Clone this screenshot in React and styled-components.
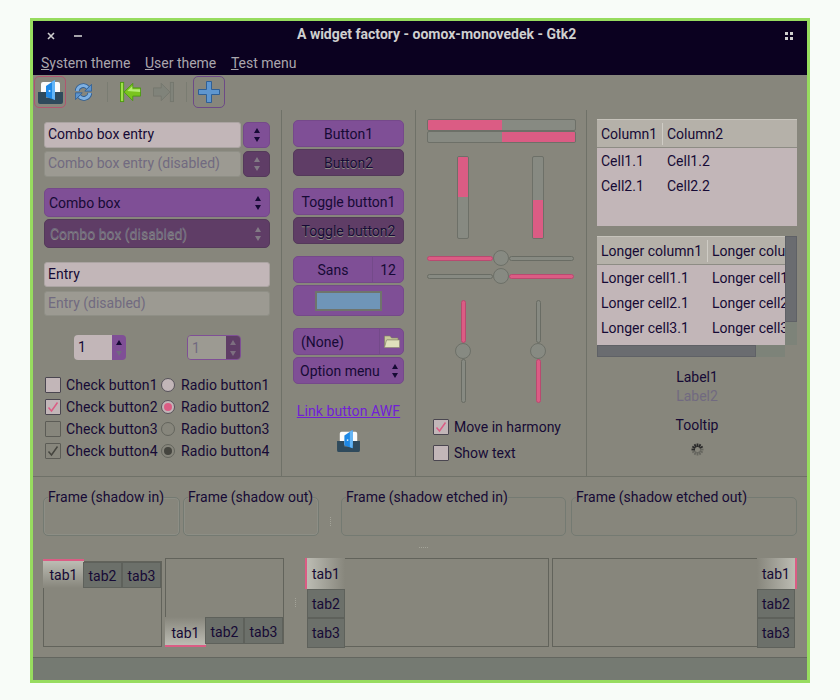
import React from "react";
import styled, { createGlobalStyle } from "styled-components";

const ink = "#160a35";
const faded = "#716a80";
const bg = "#87867c";
const purple = "#7f4f96";
const dark = "#5f3d66";
const pink = "#db5c84";
const field = "#c2b6b8";
const line = "#6f7168";

const Global = createGlobalStyle`
  html, body { margin: 0; background: #f8fcf8; }
  body { font-family: Roboto, "Liberation Sans", sans-serif; font-size: 14px; color: ${ink}; }
  * { box-sizing: border-box; }
`;

const Page = styled.div`width: 840px; height: 700px; padding: 18px 30px 0;`;
const Win = styled.div`
  width: 780px; height: 665px; border: 3px solid #97dc5f; background: ${bg};
  display: flex; flex-direction: column; overflow: hidden;
`;
const TitleBar = styled.div`
  height: 30px; flex: none; background: #0b0120; color: #cfcfcf; display: flex; align-items: center;
  justify-content: space-between; padding: 0 14px 0 14px; position: relative;
`;
const TitleText = styled.div`
  position: absolute; left: 264px; top: 4px; font-weight: 700; font-size: 14px; white-space: nowrap; line-height: 18px;
`;
const WinCtl = styled.div`display: flex; gap: 19px; align-items: center;`;
const MenuBar = styled.div`
  height: 24px; flex: none; background: #0b0120; color: #aaa6ad; display: flex; gap: 14.6px; padding: 3px 0 0 8px;
  line-height: 18px; font-size: 14px;
`;
const Ul = styled.span`text-decoration: underline;`;
const Toolbar = styled.div`height: 35px; flex: none; display: flex; align-items: flex-start; padding: 1px 0 0 1px;`;
const ToolBtn = styled.div`
  width: ${p => p.$w || 32}px; height: 32px; border-radius: 5px; display: flex; align-items: center; justify-content: center;
  margin-left: ${p => p.$ml || 0}px;
  border: 1px solid ${p => p.$ring || "transparent"};
`;
const ToolSep = styled.div`width: 1px; height: 20px; margin: 6px 0 0; background: #7a7c72; margin-left: ${p => p.$ml}px;`;

const Main = styled.div`height: 367px; flex: none; display: flex; border-bottom: 1px solid ${line};`;
const Col = styled.div`
  width: ${p => p.$w}px; flex: none; display: flex; flex-direction: column;
  padding: ${p => p.$pad}; border-right: ${p => (p.$last ? "none" : `1px solid ${line}`)};
`;
const Group = styled.div`
  display: flex; flex-direction: column; gap: ${p => p.$gap ?? 2}px; margin-top: ${p => p.$mt || 0}px;
  padding-left: ${p => p.$pl || 0}px;
`;
const Row = styled.div`display: flex; gap: ${p => p.$gap || 0}px; margin-top: ${p => p.$mt || 0}px; padding-left: ${p => p.$pl || 0}px;`;

const Field = styled.div`
  height: ${p => p.$h || 25}px; flex: 1;
  background: ${p => (p.$off ? "#9c9a92" : field)}; color: ${p => (p.$off ? faded : ink)};
  border-radius: 3px; border: 1px solid ${p => (p.$off ? "#8f8f86" : "#aba4a2")}; padding: 0 3px; line-height: 23px; white-space: nowrap;
`;
const Purple = styled.div`
  height: ${p => p.$h || 27}px; background: ${p => (p.$off ? dark : purple)}; color: ${ink};
  border: 1px solid ${p => (p.$off ? "#54395a" : "#75498a")}; border-radius: 5px;
  display: flex; align-items: center; justify-content: ${p => p.$justify || "center"};
  width: ${p => (p.$w ? `${p.$w}px` : "auto")}; padding: ${p => p.$pad || 0};
  text-shadow: ${p => (p.$off ? "0 1px 0 #8a8a82" : "none")}; white-space: nowrap;
`;
const Faint = styled.span`color: ${faded};`;
const Tri = styled.i`
  display: block; width: 0; height: 0; border-left: 3.5px solid transparent; border-right: 3.5px solid transparent;
  ${p => (p.$down ? `border-top: 5px solid ${p.$c};` : `border-bottom: 5px solid ${p.$c};`)}
`;
const ArrowsBox = styled.div`display: flex; flex-direction: column; gap: 4px; align-items: center;`;
const Arrows = ({ off }) => (
  <ArrowsBox>
    <Tri $c={off ? "#827a85" : ink} />
    <Tri $down $c={off ? "#827a85" : ink} />
  </ArrowsBox>
);

const Spin = styled.div`
  width: ${p => p.$w}px; height: 25px; display: flex; border-radius: 4px; overflow: hidden;
  border: ${p => (p.$off ? `1px solid ${purple}` : "none")}; margin-left: ${p => p.$ml}px;
`;
const SpinNum = styled.div`
  flex: 1; background: ${p => (p.$off ? "#9c9a92" : field)}; color: ${p => (p.$off ? faded : ink)}; padding-left: 4px; line-height: 25px;
`;
const SpinBtn = styled.div`
  width: 14px; background: ${p => (p.$off ? dark : purple)}; display: flex; flex-direction: column; gap: 6px; align-items: center; justify-content: center;
`;
const Choice = styled.div`display: grid; grid-template-columns: 116px auto; margin-top: 14px; padding-left: 1px; letter-spacing: 0.1px;`;
const OptRow = styled.div`height: 22px; display: flex; align-items: center; gap: ${p => p.$gap || 5}px; white-space: nowrap;`;
const Box = styled.div`
  width: 16px; height: 16px; flex: none; border: 1px solid ${p => (p.$dim ? "#5c5c56" : "#4a4650")}; border-radius: 1px;
  background: ${p => (p.$dim ? "transparent" : field)}; display: flex; align-items: center; justify-content: center;
`;
const Radio = styled.div`
  width: 14px; height: 14px; flex: none; border-radius: 50%; border: 1px solid ${p => (p.$dim ? "#63645c" : "#56525a")};
  background: ${p => (p.$dim ? "transparent" : field)}; display: flex; align-items: center; justify-content: center;
`;
const Dot = styled.div`width: 8px; height: 8px; border-radius: 50%; background: ${p => p.$c};`;
const Check = ({ c }) => (
  <svg width="12" height="12" viewBox="0 0 12 12"><path d="M1.5 6.5 L4.5 10 L10.5 1.5" fill="none" stroke={c} strokeWidth="1.5" /></svg>
);

const Divider = styled.div`width: 1px; align-self: stretch; background: #744a8a; margin: 0 ${p => p.$m ?? 6}px;`;
const Grow = styled.span`flex: 1; text-align: ${p => p.$center ? "center" : "left"};`;
const SizeCell = styled.span`width: 30px; text-align: center;`;
const Swatch = styled.div`width: 67px; height: 20px; background: #6f95b8; border: 2px solid #6f746c;`;
const LinkText = styled.a`
  display: block; color: #7120d6; text-decoration: underline; text-align: center; line-height: 18px; margin-top: 18px; letter-spacing: 0.1px;
`;
const Center = styled.div`display: flex; justify-content: center; margin-top: ${p => p.$mt || 0}px;`;

const HBar = styled.div`
  width: 149px; height: 12px; border: 1px solid #6d7068; border-radius: 2px; background: #878a82; display: flex; overflow: hidden;
  justify-content: ${p => (p.$end ? "flex-end" : "flex-start")};
`;
const HFill = styled.div`width: 50%; height: 100%; background: ${pink};`;
const VBar = styled.div`
  width: 12px; height: 83px; border: 1px solid #6d7068; border-radius: 2px; background: #878a82; display: flex; overflow: hidden;
  flex-direction: column; justify-content: ${p => (p.$end ? "flex-end" : "flex-start")};
`;
const VFill = styled.div`width: 100%; height: ${p => p.$h}%; background: ${pink};`;
const Rail = styled.div`
  display: flex; align-items: center; width: ${p => (p.$v ? "16px" : "147px")}; height: ${p => (p.$v ? "103px" : "16px")};
  flex-direction: ${p => (p.$v ? "column" : "row")}; flex: none;
`;
const Track = styled.div`
  flex: ${p => p.$n}; background: ${p => (p.$on ? pink : "#878a82")}; border-radius: 3px; border: 1px solid ${p => (p.$on ? "#b84a70" : "#696c64")};
  ${p => (p.$v ? "width: 5px;" : "height: 5px;")}
`;
const Knob = styled.div`
  width: 16px; height: 16px; flex: none; border-radius: 50%; background: #878a82; border: 1px solid #6d7068;
`;

const Tree = styled.div`
  width: 200px; height: ${p => p.$h}px; background: ${field}; overflow: hidden; flex: none;
`;
const THead = styled.div`
  height: 29px; background: #b5b1a9; border-top: 1px solid #c6c3bb; border-bottom: 1px solid #8d8c84; display: flex; align-items: center;
`;
const TH = styled.div`width: ${p => p.$w}px; flex: none; height: 22px; line-height: 22px; padding-left: 4px; border-right: ${p => (p.$end ? "none" : "1px solid #cfccc5")}; white-space: nowrap; overflow: hidden;`;
const TR = styled.div`height: 25px; display: flex; line-height: 25px;`;
const TD = styled.div`width: ${p => p.$w}px; flex: none; padding-left: 4px; white-space: nowrap; overflow: hidden;`;
const TBody = styled.div`padding-top: 1px;`;

const ScrollGrid = styled.div`
  display: grid; grid-template-columns: 188px 12px; grid-template-rows: 109px 12px; width: 200px; margin-top: 10px;
`;
const ScrollArea = styled.div`background: ${field}; overflow: hidden;`;
const VTrough = styled.div`background: #7d8379; height: 109px;`;
const VThumb = styled.div`background: #6a6c70; border: 1px solid #5f6166; height: 86px;`;
const HTrough = styled.div`background: #7d8379; height: 12px; width: 188px;`;
const HThumb = styled.div`background: #6a6c70; border: 1px solid #5f6166; height: 12px; width: 159px;`;
const LabelStack = styled.div`width: 200px; display: flex; flex-direction: column; align-items: center; margin-top: 11px; line-height: 19px;`;
const LabelOff = styled.div`color: ${faded};`;
const LabelGap = styled.div`margin-top: 10px;`;
const SpinnerWrap = styled.div`margin-top: 8px; line-height: 0;`;

const Bottom = styled.div`flex: 1; padding: 11px 10px 0; display: flex; flex-direction: column;`;
const FrameRow = styled.div`display: flex; height: 48px; align-items: flex-start;`;
const Frame = styled.fieldset`
  width: ${p => p.$w}px; height: 48px; margin: 0 ${p => p.$mr || 0}px 0 0; padding: 0; flex: none; min-width: 0;
  border: 1px solid #747a72; border-radius: 5px; box-shadow: ${p => (p.$soft ? "none" : "inset 0 0 0 1px #8d8e85")};
`;
const Legend = styled.legend`padding: 0; margin-left: 4px; line-height: 18px; white-space: nowrap;`;
const Grip = styled.div`
  width: ${p => p.$w}px; flex: none; display: flex; flex-direction: ${p => (p.$h ? "row" : "column")}; gap: 1px; align-items: center; justify-content: center;
  align-self: stretch; padding-top: ${p => p.$pt || 0}px;
`;
const GripDot = styled.i`display: block; width: 1px; height: 1px; background: #a3a398;`;
const Dots = ({ w, h, pt }) => (
  <Grip $w={w} $h={h} $pt={pt}><GripDot /><GripDot /><GripDot /><GripDot /><GripDot /></Grip>
);
const HGripRow = styled.div`height: 22px; padding-left: 375px; display: flex;`;

const TabsRow = styled.div`display: flex; height: 89px;`;
const Notebook = styled.div`
  width: ${p => p.$w}px; height: ${p => p.$h || 89}px; margin-top: ${p => p.$mt || 0}px; flex: none; border: 1px solid #62635b;
  display: flex; flex-direction: ${p => p.$dir}; justify-content: ${p => p.$justify || "flex-start"}; align-items: flex-start;
  margin-right: ${p => p.$mr || 0}px;
`;
const TabStrip = styled.div`display: flex; flex-direction: ${p => (p.$v ? "column" : "row")}; align-items: flex-start; margin: ${p => p.$m || 0};`;
const Tab = styled.div`
  width: ${p => p.$w}px; height: ${p => p.$h}px; background: ${p => (p.$g ? p.$g : "#6c706a")};
  line-height: ${p => p.$lh || p.$h}px; text-align: center; flex: none;
  border: ${p => (p.$g ? "none" : "1px solid #5e615b")};
  margin-top: ${p => p.$mtop || 0}px; margin-left: ${p => p.$ml || 0}px;
  ${p => p.$pink && `border-${p.$pink}: 2px solid ${pink};`}
`;
const StatusBar = styled.div`
  height: 23px; flex: none; background: #757a72; border-top: 1px solid #63665f;
`;

const AppIcon = ({ s = 25 }) => (
  <svg width={s} height={s - 1} viewBox="0 0 25 24">
    <rect x="3" y="2" width="19" height="14" rx="2" fill="#fbfbfb" />
    <path d="M0 12 h8 v6 h9 v-6 h8 v10 a2 2 0 0 1 -2 2 h-21 a2 2 0 0 1 -2 -2z" fill="#2f4a5c" />
    <path d="M8 6 L17 0 V20 L8 17z" fill="#1e88e5" />
    <path d="M14 1.5 L17 0 V20 L14 18.5z" fill="#64b5f6" />
    <circle cx="11.5" cy="11" r="1" fill="#d8eefc" />
  </svg>
);
const Refresh = () => (
  <svg width="19" height="20" viewBox="0 0 20 22">
    <g fill="none">
      <path d="M2.5 10 C3 4 11 1 15 6" stroke="#2e5e95" strokeWidth="5.5" />
      <path d="M2.5 10 C3 4 11 1 15 6" stroke="#7fb0e0" strokeWidth="3.5" />
      <path d="M17.5 12 C17 18 9 21 5 16" stroke="#2e5e95" strokeWidth="5.5" />
      <path d="M17.5 12 C17 18 9 21 5 16" stroke="#7fb0e0" strokeWidth="3.5" />
    </g>
    <path d="M19.5 2 V10 H11.5z" fill="#5d95cf" stroke="#2e5e95" />
    <path d="M0.5 20 V12 H8.5z" fill="#5d95cf" stroke="#2e5e95" />
  </svg>
);
const GoArrow = ({ flip, off }) => {
  const f = off ? "#80837a" : "#7ac41e";
  const s = off ? "#74776e" : "#4b9a10";
  return (
    <svg width="23" height="22" viewBox="0 0 23 22" style={flip ? { transform: "scaleX(-1)" } : undefined}>
      <rect x="0.5" y="0.5" width="3.5" height="21" fill={off ? "#80837a" : "#9fe04a"} stroke={s} />
      <path d="M4.5 11 L14 1.5 V6.5 H22.5 V15.5 H14 V20.5z" fill={f} stroke={s} />
      {!off && <path d="M8 10 L13.5 4.5 V8 H22 V11z" fill="#b5ec74" />}
    </svg>
  );
};
const Plus = () => (
  <svg width="22" height="22" viewBox="0 0 22 22">
    <path d="M8.5 0.5 H13.5 V8.5 H21.5 V13.5 H13.5 V21.5 H8.5 V13.5 H0.5 V8.5 H8.5z" fill="#5f96cf" stroke="#2f5f95" />
  </svg>
);
const Folder = () => (
  <svg width="16" height="13" viewBox="0 0 16 13">
    <path d="M0.5 12 V1 H6 L7.5 3 H14 V5 H3 Z" fill="#c9c99c" stroke="#7f7f62" strokeWidth="0.6" />
    <path d="M0.5 12.5 L2.5 5 H15.5 V12.5z" fill="#e0e0bc" stroke="#8a8a6c" strokeWidth="0.6" />
  </svg>
);
const Spinner = () => {
  const ticks = Array.from({ length: 12 }, (_, i) => i);
  return (
    <svg width="13" height="13" viewBox="0 0 13 13">
      {ticks.map(i => (
        <line key={i} x1="6.5" y1="0.5" x2="6.5" y2="4" stroke={i < 3 || i > 8 ? "#2a2a2a" : "#66665f"} strokeWidth="1.8"
          transform={`rotate(${i * 30} 6.5 6.5)`} />
      ))}
    </svg>
  );
};
const CloseX = () => (
  <svg width="8" height="8" viewBox="0 0 8 8"><path d="M1 1 L7 7 M7 1 L1 7" stroke="#cfcfcf" strokeWidth="1.6" /></svg>
);
const Minus = () => (
  <svg width="8" height="8" viewBox="0 0 8 8"><path d="M0 4 H8" stroke="#cfcfcf" strokeWidth="1.6" /></svg>
);
const GridIcon = () => (
  <svg width="8" height="8" viewBox="0 0 8 8" fill="#cfcfcf">
    <rect width="3" height="3" /><rect x="5" width="3" height="3" /><rect y="5" width="3" height="3" /><rect x="5" y="5" width="3" height="3" />
  </svg>
);

const gTop = "linear-gradient(180deg,#bcbcb3,#87867c)";
const gBot = "linear-gradient(0deg,#bcbcb3,#87867c)";
const gLeft = "linear-gradient(90deg,#bcbcb3,#87867c)";
const gRight = "linear-gradient(270deg,#bcbcb3,#87867c)";

export default function App() {
  return (
    <Page>
      <Global />
      <Win>
        <TitleBar>
          <WinCtl><CloseX /><Minus /></WinCtl>
          <TitleText>A widget factory - oomox-monovedek - Gtk2</TitleText>
          <GridIcon />
        </TitleBar>
        <MenuBar>
          <span><Ul>S</Ul>ystem theme</span>
          <span><Ul>U</Ul>ser theme</span>
          <span><Ul>T</Ul>est menu</span>
        </MenuBar>
        <Toolbar>
          <ToolBtn $ring="#b0566f"><AppIcon /></ToolBtn>
          <ToolBtn $w={19} $ml={8}><Refresh /></ToolBtn>
          <ToolSep $ml={14} />
          <ToolBtn $w={23} $ml={11}><GoArrow /></ToolBtn>
          <ToolBtn $w={23} $ml={10}><GoArrow flip off /></ToolBtn>
          <ToolSep $ml={11} />
          <ToolBtn $ring="#6d4a86" $ml={6}><Plus /></ToolBtn>
        </Toolbar>
        <Main>
          <Col $w={249} $pad="12px 11px 0">
            <Group $gap={3}>
              <Row $gap={2}>
                <Field $h={26}>Combo box entry</Field>
                <Purple $w={27} $h={26}><Arrows /></Purple>
              </Row>
              <Row $gap={2}>
                <Field $h={26} $off>Combo box entry (disabled)</Field>
                <Purple $w={27} $h={26} $off><Arrows off /></Purple>
              </Row>
            </Group>
            <Group $mt={11}>
              <Purple $h={29} $justify="space-between" $pad="0 8px 0 4px">Combo box<Arrows /></Purple>
              <Purple $h={29} $off $justify="space-between" $pad="0 8px 0 5px"><Faint>Combo box (disabled)</Faint><Arrows off /></Purple>
            </Group>
            <Group $gap={4} $mt={14}>
              <Field>Entry</Field>
              <Field $off>Entry (disabled)</Field>
            </Group>
            <Row $mt={19}>
              <Spin $w={52} $ml={30}><SpinNum>1</SpinNum><SpinBtn><Tri $c={ink} /><Tri $down $c={faded} /></SpinBtn></Spin>
              <Spin $w={54} $ml={61} $off><SpinNum $off>1</SpinNum><SpinBtn $off><Tri $c="#7d6f80" /><Tri $down $c="#7d6f80" /></SpinBtn></Spin>
            </Row>
            <Choice>
              <OptRow><Box />Check button1</OptRow>
              <OptRow $gap={6}><Radio />Radio button1</OptRow>
              <OptRow><Box><Check c={pink} /></Box>Check button2</OptRow>
              <OptRow $gap={6}><Radio><Dot $c={pink} /></Radio>Radio button2</OptRow>
              <OptRow><Box $dim />Check button3</OptRow>
              <OptRow $gap={6}><Radio $dim />Radio button3</OptRow>
              <OptRow><Box $dim><Check c="#45453f" /></Box>Check button4</OptRow>
              <OptRow $gap={6}><Radio $dim><Dot $c="#45453f" /></Radio>Radio button4</OptRow>
            </Choice>
          </Col>
          <Col $w={134} $pad="10px 11px 0">
            <Group>
              <Purple>Button1</Purple>
              <Purple $off>Button2</Purple>
            </Group>
            <Group $mt={12}>
              <Purple>Toggle button1</Purple>
              <Purple $off>Toggle button2</Purple>
            </Group>
            <Group $mt={12}>
              <Purple>
                <Grow $center>Sans</Grow><Divider $m={0} /><SizeCell>12</SizeCell>
              </Purple>
              <Purple $h={31}><Swatch /></Purple>
            </Group>
            <Group $mt={12}>
              <Purple $justify="flex-start" $pad="0 3px 0 7px">
                <Grow>(None)</Grow><Divider $m={4} /><Folder />
              </Purple>
              <Purple $justify="flex-start" $pad="0 7px 0 6px">
                <Grow>Option menu</Grow><Divider $m={6} /><Arrows />
              </Purple>
            </Group>
            <LinkText>Link button AWF</LinkText>
            <Center $mt={10}><AppIcon s={23} /></Center>
          </Col>
          <Col $w={171} $pad="9px 0 0 11px">
            <Group $gap={0}>
              <HBar><HFill /></HBar>
              <HBar $end><HFill /></HBar>
            </Group>
            <Row $gap={63} $mt={13} $pl={30}>
              <VBar><VFill $h={49} /></VBar>
              <VBar $end><VFill $h={47} /></VBar>
            </Row>
            <Group $mt={11}>
              <Rail><Track $n={66} $on /><Knob /><Track $n={66} /></Rail>
              <Rail><Track $n={66} /><Knob /><Track $n={66} $on /></Rail>
            </Group>
            <Row $gap={59} $mt={16} $pl={28}>
              <Rail $v><Track $v $n={43} $on /><Knob /><Track $v $n={44} /></Rail>
              <Rail $v><Track $v $n={43} /><Knob /><Track $v $n={44} $on /></Rail>
            </Row>
            <Group $gap={4} $mt={13} $pl={6}>
              <OptRow><Box><Check c={pink} /></Box>Move in harmony</OptRow>
              <OptRow><Box />Show text</OptRow>
            </Group>
          </Col>
          <Col $last $w={220} $pad="9px 0 0 10px">
            <Tree $h={107}>
              <THead><TH $w={66}>Column1</TH><TH $w={100} $end>Column2</TH></THead>
              <TBody>
                <TR><TD $w={66}>Cell1.1</TD><TD $w={100}>Cell1.2</TD></TR>
                <TR><TD $w={66}>Cell2.1</TD><TD $w={100}>Cell2.2</TD></TR>
              </TBody>
            </Tree>
            <ScrollGrid>
              <ScrollArea>
                <THead><TH $w={111}>Longer column1</TH><TH $w={100} $end>Longer column2</TH></THead>
                <TBody>
                  <TR><TD $w={111}>Longer cell1.1</TD><TD $w={100}>Longer cell1.2</TD></TR>
                  <TR><TD $w={111}>Longer cell2.1</TD><TD $w={100}>Longer cell2.2</TD></TR>
                  <TR><TD $w={111}>Longer cell3.1</TD><TD $w={100}>Longer cell3.2</TD></TR>
                </TBody>
              </ScrollArea>
              <VTrough><VThumb /></VTrough>
              <HTrough><HThumb /></HTrough>
            </ScrollGrid>
            <LabelStack>
              <div>Label1</div>
              <LabelOff>Label2</LabelOff>
              <LabelGap>Tooltip</LabelGap>
              <SpinnerWrap><Spinner /></SpinnerWrap>
            </LabelStack>
          </Col>
        </Main>
        <Bottom>
          <FrameRow>
            <Frame $w={137} $mr={3}><Legend>Frame (shadow in)</Legend></Frame>
            <Frame $w={136}><Legend>Frame (shadow out)</Legend></Frame>
            <Dots w={22} pt={18} />
            <Frame $w={225} $mr={5} $soft><Legend>Frame (shadow etched in)</Legend></Frame>
            <Frame $w={226} $soft><Legend>Frame (shadow etched out)</Legend></Frame>
          </FrameRow>
          <HGripRow><Dots w={10} h /></HGripRow>
          <TabsRow>
            <Notebook $w={119} $h={86} $mt={3} $mr={3} $dir="column">
              <TabStrip $m="-3px 0 0 -1px">
                <Tab $w={41} $h={29} $lh={28} $g={gTop} $pink="top">tab1</Tab>
                <Tab $w={39} $h={26} $mtop={3} $ml={-1}>tab2</Tab>
                <Tab $w={39} $h={26} $mtop={3}>tab3</Tab>
              </TabStrip>
            </Notebook>
            <Notebook $w={119} $h={86} $dir="column" $justify="flex-end">
              <TabStrip $m="0 0 -4px -1px">
                <Tab $w={41} $h={30} $lh={32} $g={gBot} $pink="bottom">tab1</Tab>
                <Tab $w={39} $h={27} $lh={29} $ml={-1}>tab2</Tab>
                <Tab $w={39} $h={27} $lh={29}>tab3</Tab>
              </TabStrip>
            </Notebook>
            <Dots w={23} />
            <Notebook $w={242} $mr={3} $dir="row">
              <TabStrip $v $m="-1px 0 0 -3px">
                <Tab $w={40} $h={31} $lh={32} $g={gLeft} $pink="left">tab1</Tab>
                <Tab $w={38} $h={29} $ml={2}>tab2</Tab>
                <Tab $w={38} $h={30} $lh={29} $ml={2}>tab3</Tab>
              </TabStrip>
            </Notebook>
            <Notebook $w={243} $dir="row" $justify="flex-end">
              <TabStrip $v $m="-1px -3px 0 0">
                <Tab $w={40} $h={31} $lh={32} $g={gRight} $pink="right">tab1</Tab>
                <Tab $w={38} $h={29}>tab2</Tab>
                <Tab $w={38} $h={30} $lh={29}>tab3</Tab>
              </TabStrip>
            </Notebook>
          </TabsRow>
        </Bottom>
        <StatusBar />
      </Win>
    </Page>
  );
}
